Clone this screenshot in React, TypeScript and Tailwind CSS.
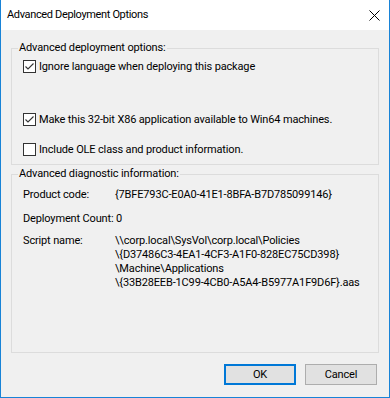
import React from 'react'

function Check({ checked }: { checked: boolean }) {
  return (
    <span className="w-[13px] h-[13px] border border-[#333333] bg-white flex items-center justify-center shrink-0">
      {checked && (
        <svg width="11" height="11" viewBox="0 0 11 11">
          <path d="M1.5 5.5 L4 8 L9.5 2.5" fill="none" stroke="#333333" strokeWidth="1.1" />
        </svg>
      )}
    </span>
  )
}

function Option({ checked, label, className }: { checked: boolean; label: string; className?: string }) {
  return (
    <div className={`ml-[11px] flex items-center h-[13px] whitespace-nowrap ${className ?? ''}`}>
      <Check checked={checked} />
      <span className="ml-[3px] leading-[14px]">{label}</span>
    </div>
  )
}

export default function App() {
  return (
    <div
      className="w-[390px] h-[398px] flex flex-col border-x border-b border-[#1883d7] text-black text-[11px] tracking-[-0.15px]"
      style={{ fontFamily: 'Roboto, "Noto Sans", Arial, sans-serif' }}
    >
      <div className="h-[30px] bg-white flex items-center justify-between pl-[6px] pr-[9px] shrink-0">
        <span className="text-[11px] tracking-[-0.35px]">Advanced Deployment Options</span>
        <svg width="11" height="11" viewBox="0 0 11 11">
          <path d="M0.5 0.5 L10.5 10.5 M10.5 0.5 L0.5 10.5" stroke="#000" strokeWidth="1" />
        </svg>
      </div>

      <div className="flex-1 bg-[#f0f0f0] flex flex-col px-[10px]">
        <fieldset className="mt-[11px] h-[124px] border border-[#dcdcdc] pt-[5px]">
          <legend className="ml-[6px] px-[1px] leading-[14px]">Advanced deployment options:</legend>
          <Option checked label="Ignore language when deploying this package" />
          <Option checked className="mt-[40px]" label="Make this 32-bit X86 application available to Win64 machines." />
          <Option checked={false} className="mt-[17px]" label="Include OLE class and product information." />
        </fieldset>

        <fieldset className="mt-[2px] h-[186px] border border-[#dcdcdc] pt-[7px] leading-[14px] whitespace-nowrap">
          <legend className="ml-[6px] px-[1px] leading-[14px]">Advanced diagnostic information:</legend>
          <div className="ml-[11px] grid grid-cols-[92px_1fr]">
            <span>Product code:</span>
            <span>{'{7BFE793C-E0A0-41E1-8BFA-B7D785099146}'}</span>
          </div>
          <div className="ml-[11px] mt-[10px]">Deployment Count: 0</div>
          <div className="ml-[11px] mt-[8px] grid grid-cols-[92px_1fr]">
            <span>Script name:</span>
            <span className="flex flex-col">
              <span>{'\\\\corp.local\\SysVol\\corp.local\\Policies'}</span>
              <span>{'\\{D37486C3-4EA1-4CF3-A1F0-828EC75CD398}'}</span>
              <span>{'\\Machine\\Applications'}</span>
              <span>{'\\{33B28EEB-1C99-4CB0-A5A4-B5977A1F9D6F}.aas'}</span>
            </span>
          </div>
        </fieldset>

        <div className="mt-[11px] flex justify-end gap-[9px] pr-[2px]">
          <button className="w-[72px] h-[21px] bg-[#e1e1e1] border-2 border-[#0078d7] leading-none">OK</button>
          <button className="w-[72px] h-[21px] bg-[#e1e1e1] border border-[#adadad] leading-none">Cancel</button>
        </div>
      </div>
    </div>
  )
}
